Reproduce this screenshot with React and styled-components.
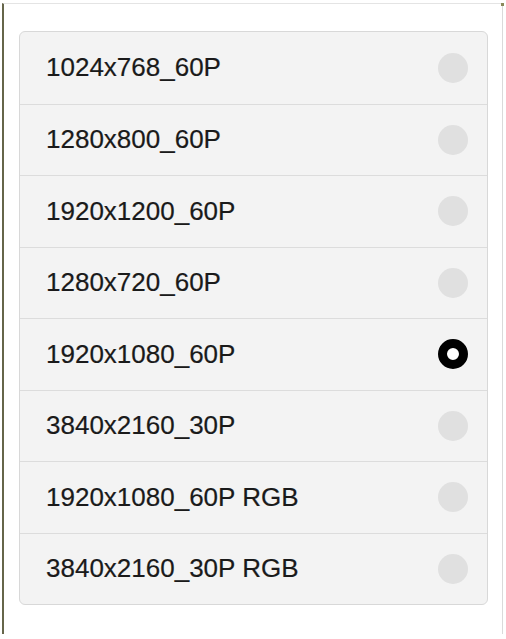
import React, { useState } from "react";
import styled, { createGlobalStyle, css } from "styled-components";

const GlobalStyle = createGlobalStyle`
  html, body {
    margin: 0;
    padding: 0;
    background: #ffffff;
  }
  body {
    font-family: "Liberation Sans", Arial, sans-serif;
  }
`;

const Frame = styled.div`
  box-sizing: border-box;
  position: relative;
  margin: 3px 0 0 2px;
  width: 501px;
  height: 631px;
  border-left: 2px solid #66664a;
  border-top: 1px solid #e4e4e4;
  border-right: 1px solid #dadada;
  padding: 27px 13px 0 15px;

  &::after {
    content: "";
    position: absolute;
    top: -1px;
    right: -2px;
    width: 3px;
    height: 3px;
    background: #8a8a5c;
  }
`;

const List = styled.ul`
  box-sizing: border-box;
  list-style: none;
  margin: 0;
  padding: 0;
  width: 469px;
  background: #f3f3f3;
  border: 1px solid #d8d8d8;
  border-radius: 6px;
  overflow: hidden;
`;

const Row = styled.li`
  box-sizing: border-box;
  height: 71.5px;
  display: flex;
  align-items: center;
  justify-content: space-between;
  padding: 0 19px 0 26px;
  cursor: pointer;

  & + & {
    border-top: 1.5px solid #dcdcdc;
  }
`;

const Label = styled.span`
  font-size: 26px;
  color: #1a1a1a;
  -webkit-text-stroke: 0.2px #1a1a1a;
`;

const Radio = styled.span`
  box-sizing: border-box;
  width: 30px;
  height: 30px;
  border-radius: 50%;
  background: #e0e0e0;

  ${({ checked }) =>
    checked &&
    css`
      width: 30px;
      height: 30px;
      background: #ffffff;
      border: 9px solid #000000;
    `}
`;

const modes = [
  "1024x768_60P",
  "1280x800_60P",
  "1920x1200_60P",
  "1280x720_60P",
  "1920x1080_60P",
  "3840x2160_30P",
  "1920x1080_60P RGB",
  "3840x2160_30P RGB",
];

const App = () => {
  const [selected, setSelected] = useState(4);

  return (
    <>
      <GlobalStyle />
      <Frame>
        <List>
          {modes.map((mode, index) => (
            <Row key={mode} onClick={() => setSelected(index)}>
              <Label>{mode}</Label>
              <Radio checked={index === selected} />
            </Row>
          ))}
        </List>
      </Frame>
    </>
  );
};

export default App;
